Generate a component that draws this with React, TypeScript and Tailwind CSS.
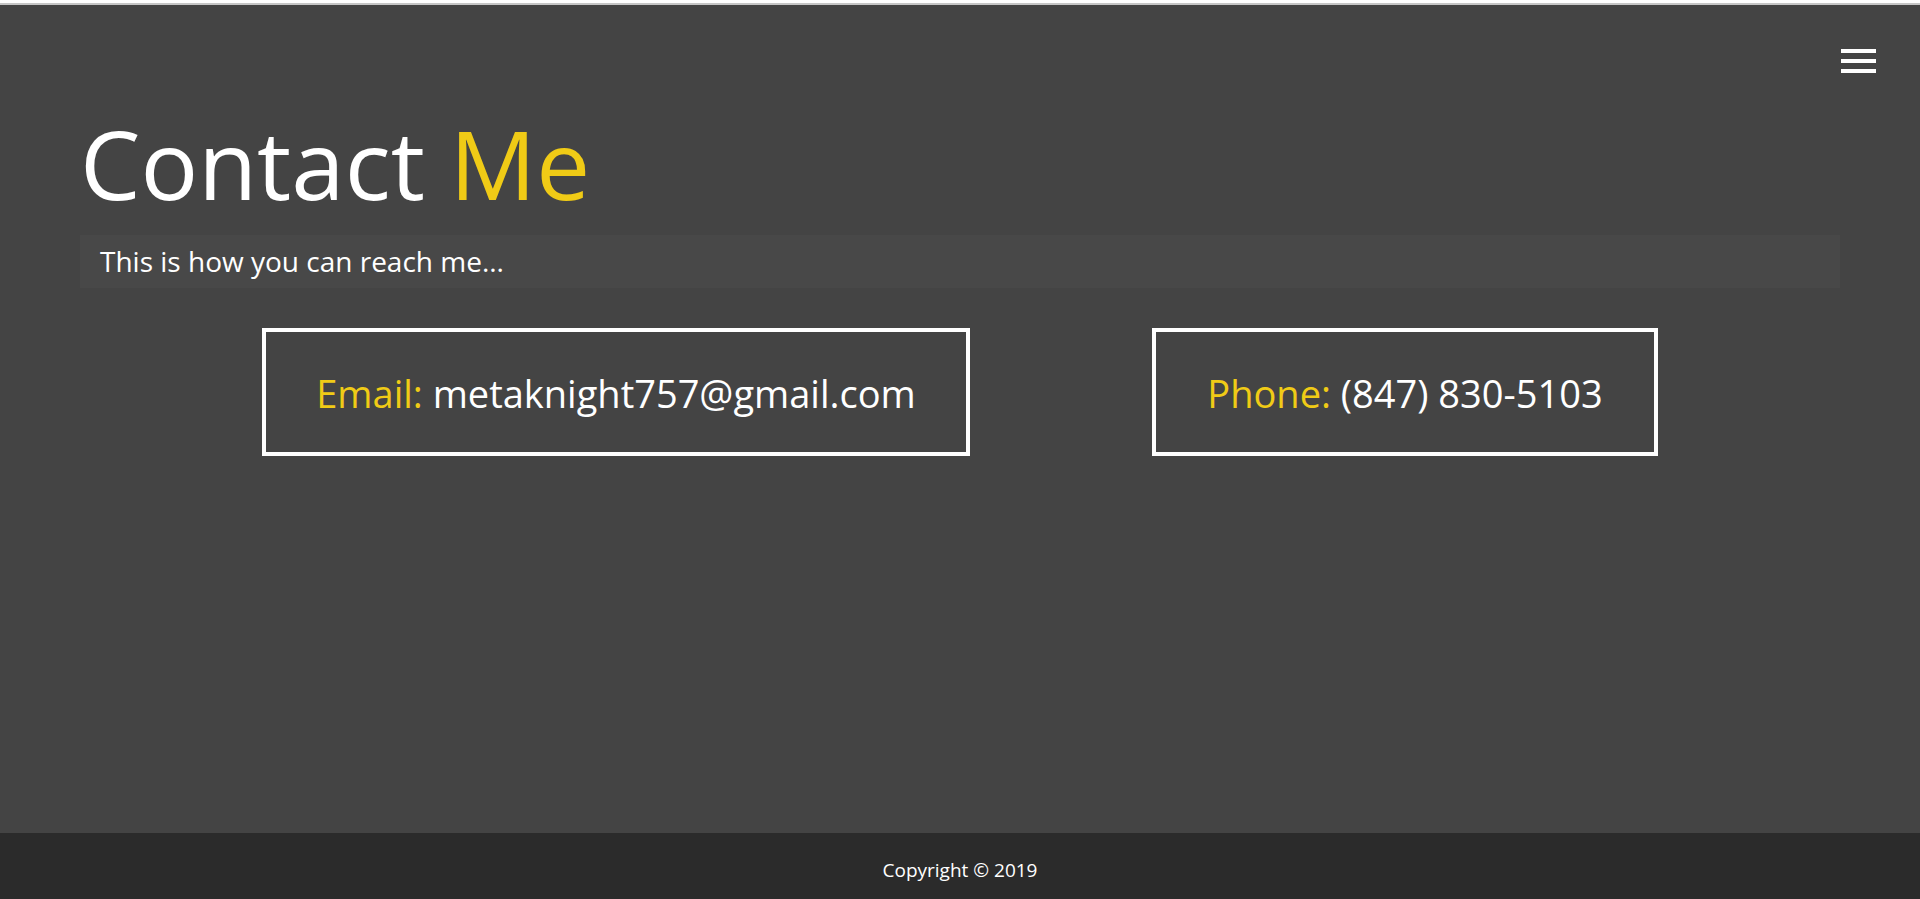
import React from "react";

export default function App() {
  return (
    <div className="min-h-[899px] flex flex-col bg-[#444444] font-['Open_Sans','Noto_Sans',sans-serif] text-white">
      <div className="h-[3px] bg-white" />
      <div className="h-[2px] bg-[#c6c6c6]" />
      <main className="relative flex-1 px-[80px]">
        <button
          aria-label="menu"
          className="absolute right-[44px] top-[44px] flex w-[35px] flex-col gap-[6px]"
        >
          <span className="block h-[4px] w-full bg-white" />
          <span className="block h-[4px] w-full bg-white" />
          <span className="block h-[4px] w-full bg-white" />
        </button>
        <h1 className="mt-[108px] text-[96px] leading-[100px] font-normal">
          Contact <span className="text-[#f0cb16]">Me</span>
        </h1>
        <div className="mt-[22px] h-[53px] bg-[#484848] pl-[20px] text-[28px] leading-[53px]">
          This is how you can reach me...
        </div>
        <div className="mt-[40px] flex justify-evenly">
          <div className="flex h-[128px] w-[708px] items-center justify-center border-[4px] border-white pt-[2px] text-[38px]">
            <span>
              <span className="text-[#f0cb16]">Email:</span> metaknight757@gmail.com
            </span>
          </div>
          <div className="flex h-[128px] w-[506px] items-center justify-center border-[4px] border-white pt-[2px] text-[38px]">
            <span>
              <span className="text-[#f0cb16]">Phone:</span> (847) 830-5103
            </span>
          </div>
        </div>
      </main>
      <footer className="flex h-[66px] items-center justify-center bg-[#2b2b2b] pt-[8px] text-[19px]">
        Copyright © 2019
      </footer>
    </div>
  );
}
